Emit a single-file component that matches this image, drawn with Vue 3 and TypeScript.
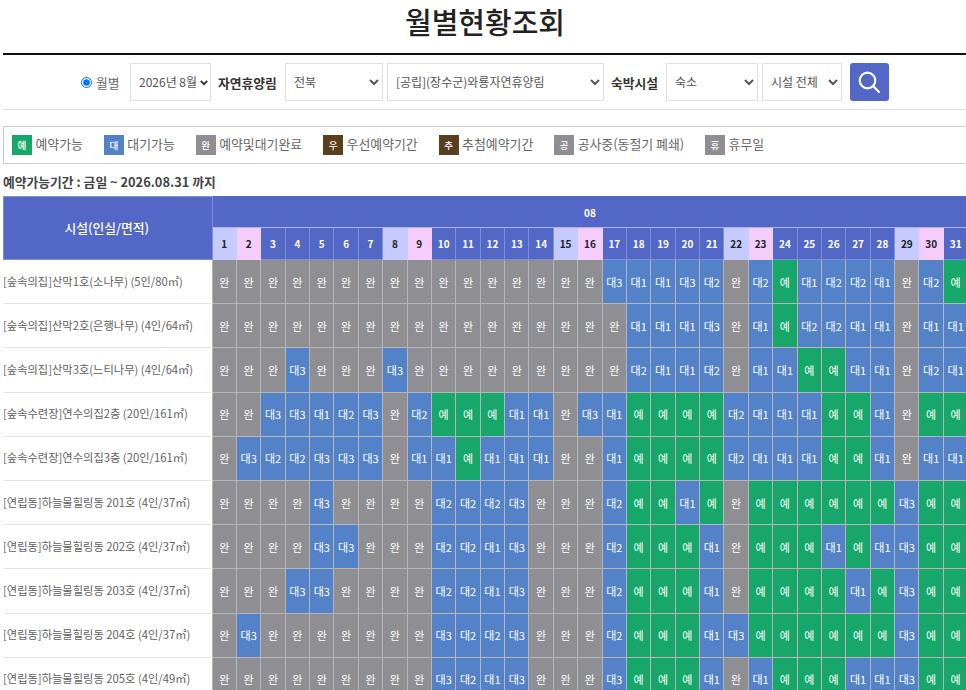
<script setup lang="ts">
type Row = { name: string; cells: string[] };

const expand = (spec: string): string[] =>
  spec.split(" ").flatMap((part) => {
    const [value, count] = part.split("*");
    return Array(Number(count ?? 1)).fill(value) as string[];
  });

const rows: Row[] = [
  ["[숲속의집]산막1호(소나무) (5인/80㎡)", "완*16 대3 대1 대1 대3 대2 완 대2 예 대1 대2 대2 대1 완 대2 예"],
  ["[숲속의집]산막2호(은행나무) (4인/64㎡)", "완*17 대1 대1 대1 대3 완 대1 예 대2 대2 대1 대1 완 대1 대1"],
  ["[숲속의집]산막3호(느티나무) (4인/64㎡)", "완*3 대3 완*3 대3 완*9 대2 대1 대1 대2 완 대1 대1 예 예 대1 대1 완 대2 대1"],
  ["[숲속수련장]연수의집2층 (20인/161㎡)", "완 완 대3 대3 대1 대2 대3 완 대2 예*3 대1 대1 완 대3 대1 예*4 대2 대1*3 예 예 대1 완 예 예"],
  ["[숲속수련장]연수의집3층 (20인/161㎡)", "완 대3 대2 대2 대3*3 완 대1 대1 예 대1*3 완 완 대1 예*4 대2 대1*3 예 예 대1 완 대1 대1"],
  ["[연립동]하늘물힐링동 201호 (4인/37㎡)", "완*4 대3 완*4 대2*3 대3 완*3 대2 예 예 대1 예 완 예*6 대3 예 예"],
  ["[연립동]하늘물힐링동 202호 (4인/37㎡)", "완*4 대3 대3 완*3 대2 대2 대1 대3 완*3 대2 예*3 대1 완 예*3 대1 예 대1 대3 예 예"],
  ["[연립동]하늘물힐링동 203호 (4인/37㎡)", "완*3 대3 대3 완*4 대2 대2 대1 대3 완*3 대2 예*3 대1 완 예*4 대1 예 대3 예 예"],
  ["[연립동]하늘물힐링동 204호 (4인/37㎡)", "완 대3 완*7 대3 대2 대2 대3 완*3 대2 예*3 대1 대3 예*6 대3 예 예"],
  ["[연립동]하늘물힐링동 205호 (4인/49㎡)", "완*9 대3 대2 대1 대3 완*3 대3 예*3 대1 완 대1 예*3 대1 대1 대3 예 예"],
].map(([name, spec]) => ({ name, cells: expand(spec) }));

const days = Array.from({ length: 31 }, (_, i) => i + 1);

const dayClass = (day: number): string => {
  if (day % 7 === 1) return "sat";
  if (day % 7 === 2) return "sun";
  return "wk";
};

const cellClass = (value: string): string => {
  if (value === "예") return "ok";
  if (value === "완") return "done";
  return "wait";
};

const legend = [
  { mark: "예", label: "예약가능", tone: "ok" },
  { mark: "대", label: "대기가능", tone: "wait" },
  { mark: "완", label: "예약및대기완료", tone: "done" },
  { mark: "우", label: "우선예약기간", tone: "brown" },
  { mark: "추", label: "추첨예약기간", tone: "brown" },
  { mark: "공", label: "공사중(동절기 폐쇄)", tone: "done" },
  { mark: "휴", label: "휴무일", tone: "done" },
];
</script>

<template>
  <div class="page">
    <h1 class="title">월별현황조회</h1>

    <form class="search" @submit.prevent>
      <label class="radio"><input type="radio" name="mode" checked /> 월별</label>
      <span class="month-wrap">
        <select class="sel w-month"><option>2026년 8월</option></select>
        <svg class="chev" width="8" height="6" viewBox="0 0 8 6" fill="none" stroke="#333" stroke-width="1.8">
          <path d="M0.8 1 L4 4.2 L7.2 1" />
        </svg>
      </span>
      <strong class="lab">자연휴양림</strong>
      <select class="sel w-region"><option>전북</option></select>
      <select class="sel w-forest"><option>[공립](장수군)와룡자연휴양림</option></select>
      <strong class="lab lab2">숙박시설</strong>
      <select class="sel w-type"><option>숙소</option></select>
      <select class="sel w-all"><option>시설 전체</option></select>
      <button class="go" type="submit" aria-label="검색">
        <svg width="24" height="24" viewBox="0 0 24 24" fill="none" stroke="#fff" stroke-width="2.2" stroke-linecap="round">
          <circle cx="10.5" cy="10.5" r="7.8" />
          <path d="M16.3 16.3 L22 22" />
        </svg>
      </button>
    </form>

    <ul class="legend">
      <li v-for="item in legend" :key="item.mark" class="legend-item">
        <span class="badge" :class="item.tone">{{ item.mark }}</span>
        <span class="legend-label">{{ item.label }}</span>
      </li>
    </ul>

    <p class="period">예약가능기간 : 금일 ~ 2026.08.31 까지</p>

    <table class="grid">
      <colgroup>
        <col class="c-name" />
        <col v-for="d in days" :key="d" class="c-day" />
      </colgroup>
      <thead>
        <tr class="h1">
          <th rowspan="2" class="facility">시설(인실/면적)</th>
          <th :colspan="31" class="month">08</th>
        </tr>
        <tr class="h2">
          <th v-for="d in days" :key="d" :class="dayClass(d)">{{ d }}</th>
        </tr>
      </thead>
      <tbody>
        <tr v-for="row in rows" :key="row.name">
          <td class="name">{{ row.name }}</td>
          <td v-for="(c, i) in row.cells" :key="i" class="cell" :class="cellClass(c)">{{ c }}</td>
        </tr>
      </tbody>
    </table>
  </div>
</template>

<style>
html,
body {
  overflow: hidden;
  background: #fff;
}
</style>

<style scoped>
.page {
  width: 966px;
  margin-left: 3px;
  font-family: "Noto Sans CJK KR", "Noto Sans", sans-serif;
  font-size: 12.8px;
  color: #666;
}
.title {
  margin: 0;
  height: 53px;
  padding-right: 2px;
  border-bottom: 2px solid #111;
  box-sizing: content-box;
  text-align: center;
  font-size: 29px;
  font-weight: 500;
  line-height: 42px;
  color: #222;
  width: 964px;
}
.search {
  display: flex;
  align-items: center;
  height: 55px;
  padding: 0 0 0 78px;
  box-sizing: border-box;
  border-bottom: 1px solid #ddd;
}
.radio {
  display: flex;
  align-items: center;
  gap: 4px;
  width: 49px;
}
.radio input {
  margin: 0;
  width: 11px;
  height: 11px;
}
.sel {
  height: 38px;
  box-sizing: border-box;
  border: 1px solid #e0e0e0;
  background: #fff;
  color: #555;
  font-family: inherit;
  font-size: 12px;
  padding: 0 0 2px 4px;
  border-radius: 0;
}
.month-wrap {
  position: relative;
  display: flex;
  flex: none;
}
.chev {
  position: absolute;
  right: 3px;
  top: 17px;
  pointer-events: none;
}
.w-month {
  width: 81px;
  appearance: none;
  padding-left: 8px;
}
.w-region { width: 98px; margin-right: 4px; }
.w-forest { width: 217px; }
.w-type { width: 92px; margin-right: 4px; }
.w-all { width: 80px; }
.lab {
  color: #333;
  margin: 0 8px 0 7px;
  font-weight: 700;
}
.go {
  width: 39px;
  height: 38px;
  margin-left: 8px;
  padding: 0;
  border: 0;
  border-radius: 3px;
  background: #5267c6;
  display: flex;
  align-items: center;
  justify-content: center;
}
.legend {
  list-style: none;
  margin: 16px 0 0;
  padding: 0 0 0 8px;
  height: 36px;
  border: 1px solid #ccc;
  border-right: 0;
  display: flex;
  align-items: center;
}
.legend-item {
  display: flex;
  align-items: center;
  gap: 3.5px;
  margin-right: 20.9px;
  white-space: nowrap;
  font-size: 12.9px;
}
.legend-label {
  margin-bottom: 3px;
}
.badge {
  width: 20px;
  height: 20px;
  flex: none;
  text-align: center;
  line-height: 20px;
  font-size: 9.6px;
  font-weight: 500;
  color: #fff;
}
.ok { background: #17a76a; }
.wait { background: #5382c8; }
.done { background: #8e8e93; }
.brown { background: #5a3f1e; }
.period {
  margin: 0;
  height: 32px;
  line-height: 35px;
  font-weight: 700;
  color: #444;
}
.grid {
  width: 964.4px;
  table-layout: fixed;
  border-collapse: collapse;
}
.c-name { width: 208.6px; }
.c-day { width: 24.38px; }
.h1 th { height: 30px; }
.h2 th { height: 31px; }
th {
  padding: 0;
  background: #5267c6;
  color: #fff;
  font-size: 10px;
  font-weight: 700;
  border: 1px solid #7f8fd6;
}
.facility {
  font-size: 12.8px;
  font-weight: 500;
  background: #5267c6;
  color: #fff;
  padding-bottom: 2px;
  padding-right: 2px;
}
.month {
  border-color: #5267c6;
  border-bottom-color: #a9b4e6;
}
.h2 .sat { background: #c5cbfe; color: #222; border-color: #c5cbfe; }
.h2 .sun { background: #f4cdfd; color: #222; border-color: #f4cdfd; }
td {
  height: 44.2px;
  padding: 0;
  box-sizing: border-box;
}
.name {
  font-size: 11.25px;
  color: #5f5f5f;
  white-space: nowrap;
  border-bottom: 1px solid #e5e5e5;
  overflow: hidden;
  padding-bottom: 2px;
  text-indent: -0.5px;
}
.cell {
  text-align: center;
  font-size: 11px;
  color: #fff;
  border: 1px solid #b4b6ba;
}
</style>
